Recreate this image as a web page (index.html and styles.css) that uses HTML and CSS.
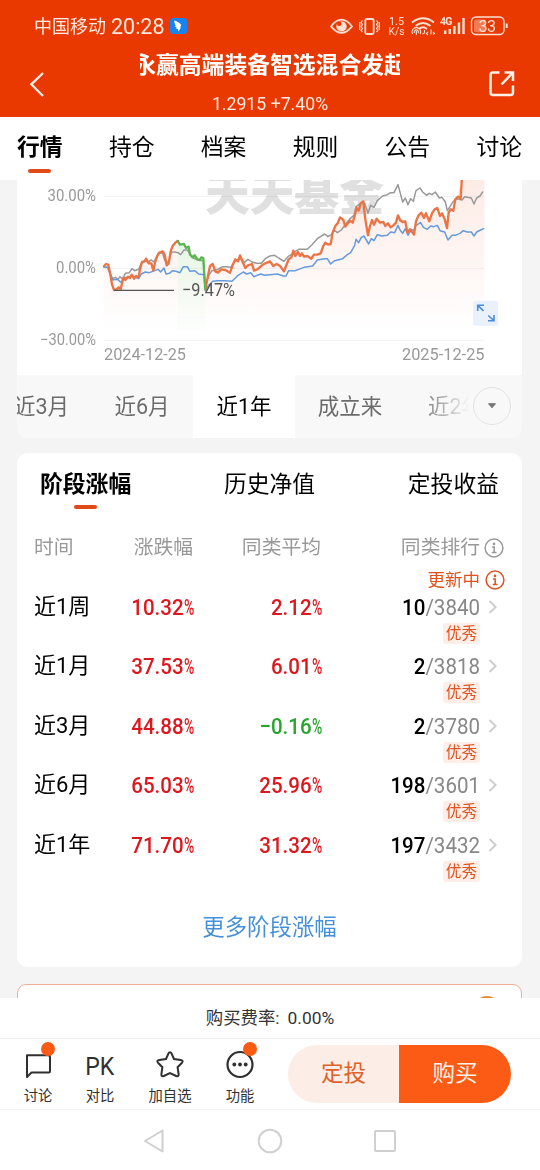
FILE: index.html
```html
<!DOCTYPE html>
<html lang="zh-CN">
<head>
<meta charset="utf-8">
<title>基金行情</title>
<link rel="stylesheet" href="styles.css">
</head>
<body>
<div class="screen">
  <header class="header">
    <div class="status">
      <span class="carrier">中国移动</span><span class="clock">20:28</span>
      <svg class="bird" width="17" height="16" viewBox="0 0 17 16"><rect width="17" height="16" rx="3.5" fill="#1583f2"/><path d="M4.200 2.400Q10.500 4.500 11.200 7.200L10 9.500 11 9.600 8.400 13.600 8 11.300 6 10.500 6.700 9.800 4.800 8.300 5.800 8Q4.200 5.500 4.200 2.400Z" fill="#fff"/></svg>
      <svg class="status-icons" width="180" height="24" viewBox="329 14 180 24" fill="none" stroke="#fde0d4">
        <path d="M331 26.400Q341.500 13 352 26.400Q341.500 39.500 331 26.400Z" stroke-width="1.700"/>
        <circle cx="341.500" cy="26.400" r="5.200" fill="#fde0d4" stroke="none"/><circle cx="339.300" cy="23.800" r="2.300" fill="#e93900" stroke="none"/>
        <rect x="365.300" y="19" width="8.400" height="15" rx="1.500" stroke-width="1.800"/>
        <path d="M362.400 20.500l-1.300 2 1.300 2-1.300 2 1.300 2-1.300 2 1.300 1.500M376.600 20.500l1.300 2-1.300 2 1.300 2-1.300 2 1.300 2-1.300 1.500M359.700 22v8M379.300 22v8" stroke-width="1.200"/>
        <g class="speed"><text x="389" y="25" textLength="15" lengthAdjust="spacingAndGlyphs">1.5</text><text x="388.500" y="35.200" textLength="16" lengthAdjust="spacingAndGlyphs">K/s</text></g>
        <path d="M412 22.500Q423 14 434 22.500M415.500 26Q423 20 430.500 26M419 29Q423 25.600 427 29" stroke-width="2"/>
        <path d="M412.600 34a4.300 4.300 0 1 1 7.500 0M414.500 33a2.100 2.100 0 1 1 3.700 0M416.400 31v4M424.500 30v3l-2 1M428 32l-1.500 1.500 1.500 1.500M431 29.500v5M433 32l1.500 1.500-1.500 1" stroke-width="1.100"/>
        <text x="440" y="25" class="net" textLength="12.500">4G</text>
        <path d="M445.200 30.500V34M449.800 29V34M454.400 26V34M459 22.500V34M463.500 18V34" stroke-width="2.400"/>
        <rect x="471.500" y="17" width="32.500" height="17.500" rx="4.500" stroke-width="1.400"/><rect x="474" y="19.400" width="12" height="12.800" rx="2" fill="#f27b56" stroke="none"/>
        <path d="M506.700 23.500v4.500" stroke-width="2"/><text x="478.500" y="31.600" class="battery" textLength="17.500">33</text>
      </svg>
    </div>
    <div class="titlebar">
      <svg class="back" width="18" height="28" viewBox="0 0 18 28" fill="none" stroke="#ffeee8" stroke-width="2.300"><path d="M15 3L3.300 14.300 15 26"/></svg>
      <div class="title-box">
        <div class="marquee"><span>永赢高端装备智选混合发起</span></div>
        <div class="quote">1.2915 +7.40%</div>
      </div>
      <svg class="share" width="26" height="26" viewBox="0 0 26 26" fill="none" stroke="#ffeee8" stroke-width="2.500"><path d="M10.500 1.500H4Q1.500 1.500 1.500 4V21.500Q1.500 24 4 24H21.500Q24 24 24 21.500V14.500M15.500 1.500H24V10M24 1.500L12.500 13.500"/></svg>
    </div>
  </header>

  <nav class="tabs">
    <span class="tab active">行情</span><span class="tab">持仓</span><span class="tab">档案</span><span class="tab">规则</span><span class="tab">公告</span><span class="tab">讨论</span>
  </nav>

  <main class="content">
    <section class="chart-card">
      <svg class="chart" width="505" height="195" viewBox="17 180 505 195">
        <defs>
          <linearGradient id="warm" x1="0" y1="0" x2="0" y2="1"><stop offset="0" stop-color="#fdebe5"/><stop offset="1" stop-color="#fdebe5" stop-opacity="0"/></linearGradient>
          <linearGradient id="cool" x1="0" y1="0" x2="0" y2="1"><stop offset="0" stop-color="#e3f7e4"/><stop offset="1" stop-color="#f4fcf4" stop-opacity=".2"/></linearGradient>
        </defs>
        <text x="205" y="211" class="watermark" textLength="179">天天基金</text>
        <g class="fills" transform="translate(0 176) scale(.33333)">
          <path fill="url(#warm)" d="M312 470V270L325 266 342 342 362 340 370 305 420 280 438 248 460 284 488 226 500 268 533 195 570 236 610 246 616 340 638 264 690 290 720 238 756 264 806 256 852 286 880 224 934 248 962 232 992 204 1020 124 1050 134 1090 76 1104 178 1122 130 1180 148 1194 118 1216 136 1242 176 1264 110 1288 136 1312 96 1341 156 1386 12H1453V470Z"/>
          <path fill="url(#cool)" d="M533 195L570 236 610 246 616 340V465H533Z"/>
        </g>
        <path d="M104 196.300H484M104 268.300H484M104 340.300H484" stroke="#000" stroke-opacity=".055"/>
        <g transform="translate(0 176) scale(.33333)" fill="none" stroke-linejoin="round" stroke-linecap="round">
          <path class="gray-line" d="M312 274L322 274 330 292 338 308 346 304 354 310 360 302 368 310 376 292 388 290 396 278 404 284 416 280 424 262 434 254 444 258 454 252 462 258 470 242 476 230 488 232 494 252 500 264 508 250 514 228 524 228 534 230 542 236 552 222 562 222 570 234 580 246 594 252 610 254 616 330 626 298 636 284 650 282 668 272 678 272 692 274 704 256 714 252 724 246 732 260 744 250 756 258 770 262 784 262 796 248 810 240 824 238 836 246 852 256 864 242 876 234 886 226 896 220 922 220 936 206 952 188 974 174 984 182 994 176 1002 162 1012 170 1024 162 1034 148 1050 128 1062 118 1068 92 1082 82 1094 82 1104 112 1112 88 1122 94 1132 74 1148 60 1162 56 1172 50 1182 50 1194 26 1208 78 1216 66 1224 86 1232 68 1240 76 1248 44 1260 36 1268 48 1280 58 1288 52 1296 56 1306 48 1318 66 1326 64 1336 78 1342 104 1350 92 1360 76 1372 68 1386 72 1394 62 1414 66 1422 84 1430 66 1440 60 1448 48"/>
          <path class="blue-line" d="M312 274H324L330 292 338 312 352 310 364 320 370 306 382 304 396 300 416 308 424 294 436 288 448 290 464 284 474 280 482 288 492 276 498 294 508 292 518 284 528 286 540 290 550 272 562 272 570 286 584 284 596 294 612 296 616 344 624 330 638 316 654 314 674 314 696 316 712 300 730 288 740 294 752 290 762 302 782 294 794 298 810 296 832 294 850 300 858 300 866 284 886 284 912 274 938 270 952 252 974 248 982 248 992 264 1004 254 1028 248 1042 236 1052 230 1064 208 1068 190 1076 200 1084 184 1092 180 1106 204 1114 188 1122 194 1132 176 1146 180 1162 178 1172 168 1184 170 1194 148 1200 162 1208 172 1216 158 1224 178 1234 160 1242 164 1248 148 1262 140 1270 154 1282 160 1292 150 1302 152 1312 148 1320 164 1334 168 1344 192 1356 178 1366 178 1380 172 1390 164 1402 168 1414 168 1422 180 1430 168 1442 162 1451 158"/>
          <path class="orange-line" d="M312 270L318 264 325 266 330 290 336 325 342 342 350 340 356 334 362 340 370 305 376 312 384 302 390 306 395 296 402 308 408 300 416 304 420 280 426 258 434 256 438 248 446 262 454 262 460 284 466 256 472 240 478 230 488 226 494 236 500 268 506 262 512 226 518 210 526 200 533 195M616 340L624 300 630 270 638 264 646 286 654 290 664 280 676 282 690 290 698 268 706 250 714 256 720 238 728 258 736 276 744 268 756 264 762 284 772 280 786 268 796 262 810 256 820 270 830 264 840 270 852 286 858 270 866 250 874 244 880 224 886 240 894 228 900 240 906 232 912 242 922 240 934 248 942 236 952 236 962 232 970 210 976 200 984 206 992 204 998 170 1006 150 1014 140 1020 124 1030 132 1036 152 1042 144 1050 134 1058 140 1064 120 1070 96 1076 104 1082 82 1090 76 1096 130 1104 178 1110 150 1116 132 1122 146 1130 128 1140 140 1150 138 1156 150 1164 142 1172 154 1180 148 1188 140 1194 118 1200 132 1208 138 1216 136 1222 170 1230 160 1242 176 1248 136 1256 118 1264 110 1272 126 1278 112 1288 136 1296 112 1304 100 1312 96 1320 120 1326 112 1334 130 1341 156 1346 110 1352 100 1360 104 1366 70 1374 62 1382 68 1386 0"/>
          <path class="green-line" d="M533 195L540 206 552 204 558 216 566 212 570 236 578 244 584 238 592 250 600 252 604 244 610 246 613 300 616 340"/>
        </g>
        <path d="M114 290.400H174" stroke="#555" stroke-width="1.200"/>
        <text x="182" y="295.500" class="low" textLength="53" lengthAdjust="spacingAndGlyphs">−9.47%</text>
        <g class="axis">
          <text x="47.500" y="201.300" textLength="48.500" lengthAdjust="spacingAndGlyphs">30.00%</text><text x="56" y="273.300" textLength="40" lengthAdjust="spacingAndGlyphs">0.00%</text><text x="40" y="345.300" textLength="56" lengthAdjust="spacingAndGlyphs">−30.00%</text>
          <text x="104" y="360.300" textLength="82" lengthAdjust="spacingAndGlyphs">2024-12-25</text><text x="402" y="360.300" textLength="82.500" lengthAdjust="spacingAndGlyphs">2025-12-25</text>
        </g>
        <rect x="473" y="300.700" width="25" height="25" rx="2.500" fill="#e8f1fd"/>
        <path d="M477.700 311V305.300H484M478 305.600L483.500 310.800M494 315V320.800H488M493.700 320.500L488.300 315.500" fill="none" stroke="#488bd8" stroke-width="1.600"/>
      </svg>
      <div class="periods">
        <span class="period first">近3月</span><span class="period">近6月</span><span class="period selected">近1年</span><span class="period since">成立来</span><span class="period faded">近2年</span>
        <span class="drop"><svg width="10" height="6" viewBox="0 0 10 6"><path d="M1.500.7H8.500L5 4.800Z" fill="#777" stroke="#777" stroke-linejoin="round"/></svg></span>
      </div>
    </section>

    <section class="perf-card">
      <div class="subtabs"><span class="subtab active">阶段涨幅</span><span class="subtab">历史净值</span><span class="subtab">定投收益</span></div>
      <div class="cols head"><span>时间</span><span class="num">涨跌幅</span><span class="num">同类平均</span><span class="rank">同类排行</span><svg class="info" width="20" height="20" viewBox="0 0 20 20"><use href="#info"/></svg></div>
      <div class="updating"><span>更新中</span><svg class="info" width="20" height="20" viewBox="0 0 20 20"><use href="#info"/></svg></div>
      <div class="cols row"><span>近1周</span><span class="num up">10.32<i>%</i></span><span class="num up">2.12<i>%</i></span><span class="rank"><b>10</b>/3840</span><svg class="chev" width="10" height="14"><use href="#chev"/></svg><em>优秀</em></div>
      <div class="cols row"><span>近1月</span><span class="num up">37.53<i>%</i></span><span class="num up">6.01<i>%</i></span><span class="rank"><b>2</b>/3818</span><svg class="chev" width="10" height="14"><use href="#chev"/></svg><em>优秀</em></div>
      <div class="cols row"><span>近3月</span><span class="num up">44.88<i>%</i></span><span class="num down">−0.16<i>%</i></span><span class="rank"><b>2</b>/3780</span><svg class="chev" width="10" height="14"><use href="#chev"/></svg><em>优秀</em></div>
      <div class="cols row"><span>近6月</span><span class="num up">65.03<i>%</i></span><span class="num up">25.96<i>%</i></span><span class="rank"><b>198</b>/3601</span><svg class="chev" width="10" height="14"><use href="#chev"/></svg><em>优秀</em></div>
      <div class="cols row"><span>近1年</span><span class="num up">71.70<i>%</i></span><span class="num up">31.32<i>%</i></span><span class="rank"><b>197</b>/3432</span><svg class="chev" width="10" height="14"><use href="#chev"/></svg><em>优秀</em></div>
      <div class="more">更多阶段涨幅</div>
    </section>

    <section class="promo"><svg width="28" height="28" viewBox="0 0 28 28"><circle cx="14" cy="14" r="13" fill="#ffc66b" stroke="#e38b2c" stroke-width="2"/></svg></section>
  </main>

  <footer class="footer">
    <div class="fee"><span>购买费率:</span><span class="fee-value">0.00%</span></div>
    <div class="actions">
      <div class="action talk"><svg width="32" height="32" viewBox="0 0 32 32"><path d="M5 8.200H26Q28 8.200 28 10V24Q28 25.500 26.500 25.500H9.500L5 30Z" fill="none" stroke="#303030" stroke-width="2" stroke-linejoin="round"/></svg><span>讨论</span><i class="dot"></i></div>
      <div class="action pk"><strong>PK</strong><span>对比</span></div>
      <div class="action star"><svg width="32" height="32" viewBox="0 0 32 32"><path d="M16 5.200Q17 5.200 17.500 6.300L20 12 26.800 13Q29.800 13.700 28 15.700L23.600 20.200 24.600 27Q24.900 30.200 22.200 29L16 26 9.800 29Q7.100 30.200 7.400 27L8.400 20.200 4 15.700Q2.200 13.700 5.200 13L12 12 14.500 6.300Q15 5.200 16 5.200Z" fill="none" stroke="#303030" stroke-width="2"/></svg><span>加自选</span></div>
      <div class="action func"><svg width="32" height="32" viewBox="0 0 32 32"><circle cx="16" cy="17.500" r="12.500" fill="none" stroke="#303030" stroke-width="2.200"/><g fill="#303030"><circle cx="10.300" cy="17.500" r="1.900"/><circle cx="16" cy="17.500" r="1.900"/><circle cx="21.700" cy="17.500" r="1.900"/></g></svg><span>功能</span><i class="dot"></i></div>
      <div class="buttons"><span class="invest">定投</span><span class="buy">购买</span></div>
    </div>
    <div class="sysnav">
      <svg width="24" height="26" viewBox="0 0 24 26"><path d="M20.500 2.500V23.500L3 13Z"/></svg>
      <svg width="26" height="26" viewBox="0 0 26 26"><circle cx="13" cy="13" r="11.300"/></svg>
      <svg width="24" height="26" viewBox="0 0 24 26"><rect x="2" y="3" width="20" height="20" rx="1"/></svg>
    </div>
  </footer>
</div>
<svg class="symbols" width="0" height="0">
  <symbol id="info" viewBox="0 0 20 20"><circle cx="10" cy="10" r="8.900" fill="none" stroke="currentColor" stroke-width="1.500"/><circle cx="10" cy="5.900" r="1.300" fill="currentColor"/><path d="M8 8.900H10.200V14.500M7.700 14.500H12.500" fill="none" stroke="currentColor" stroke-width="1.500"/></symbol>
  <symbol id="chev" viewBox="0 0 10 14"><path d="M1.500 1L7.700 7 1.500 13" fill="none" stroke="#ccc" stroke-width="1.800"/></symbol>
</svg>
</body>
</html>
```
FILE: styles.css
```css
* { box-sizing: border-box; }
body { margin: 0; background: #f4f4f4; color: #000; font-family: Roboto, "Noto Sans CJK SC", sans-serif; }
span, strong, em, text { white-space: nowrap; }
.screen { width: 540px; height: 1170px; overflow: hidden; display: flex; flex-direction: column; }
.symbols { position: absolute; }

.header { height: 117px; background: #e93900; color: #ffe9e0; flex: none; }
.status { height: 52px; padding: 0 31px 0 34px; display: flex; align-items: center; }
.carrier { font-size: 18px; line-height: 24px; width: 77px; padding-top: 1px; }
.clock { font-size: 21.5px; line-height: 24px; width: 59px; padding-top: 2px; }
.status-icons { margin-left: auto; }
.status-icons text { fill: #fde0d4; stroke: none; }
.speed { font-size: 10.5px; }
.net { font-size: 10.5px; font-weight: 700; }
.battery { font-size: 16px; }
.titlebar { height: 65px; display: flex; padding: 0 25px 0 28px; }
.back { margin-top: 18px; }
.share { margin: 19px 0 0 auto; }
.title-box { width: 260px; margin-left: 94px; }
.marquee { height: 28px; display: flex; justify-content: center; overflow: hidden; font-size: 22.8px; line-height: 28px; font-weight: 700; color: #fff; }
.quote { text-align: center; font-size: 17.7px; line-height: 20px; margin-top: 14px; }

.tabs { height: 63px; padding: 0 18px 0 17px; background: #fff; display: flex; justify-content: space-between; flex: none; }
.tab { font-size: 22.8px; line-height: 62px; }
.tab.active, .subtab.active { font-weight: 700; display: flex; flex-direction: column; align-items: center; }
.tab.active::after, .subtab.active::after { content: ""; width: 23px; height: 4px; border-radius: 2px; background: #e14b18; margin-top: -10px; }

.content { padding: 0 18px 0 17px; height: 818px; overflow: hidden; flex: none; }
.chart-card { height: 258px; }
.chart { display: block; background: #fff; }
.watermark { font: 900 45px "Noto Sans CJK SC", sans-serif; fill: #e0e0e0; }
.fills { mix-blend-mode: multiply; }
.gray-line { stroke: #999; stroke-width: 4.5; }
.blue-line { stroke: #659bdc; stroke-width: 4.5; }
.orange-line { stroke: #ec7344; stroke-width: 7; }
.green-line { stroke: #5bb750; stroke-width: 7; }
.low { font-size: 18.5px; fill: #555; }
.axis { font-size: 16px; fill: #999; }
.periods { height: 63px; background: #f8f8f8; border-radius: 0 0 10px 10px; display: flex; align-items: stretch; overflow: hidden; color: #6c6c6c; font-size: 21.5px; line-height: 64px; }
.period { width: 102px; text-align: center; flex: none; }
.period.first { width: 74px; display: flex; justify-content: flex-end; padding-right: 22px; }
.period.selected { background: #fff; color: #000; }
.period.since { width: 110px; }
.period.faded { width: 68px; overflow: hidden; text-align: left; padding-left: 23px; color: transparent; background: linear-gradient(90deg, #777 25%, #f8f8f8 95%); background-clip: text; -webkit-background-clip: text; }
.drop { width: 38px; height: 38px; flex: none; border: 1px solid #e2e2e2; border-radius: 50%; margin-top: 12px; display: flex; align-items: center; justify-content: center; }

.perf-card { margin-top: 15px; height: 514px; background: #fff; border-radius: 11px; padding: 0 17px; }
.subtabs { height: 80px; padding: 0 6px; display: flex; justify-content: space-between; font-size: 22.8px; line-height: 63px; }
.subtab.active::after { margin-top: -11px; }
.cols { display: grid; grid-template-columns: 70px 90px 128px 158px 25px; font-size: 22px; line-height: 30px; }
.num, .rank { text-align: right; }
.head { height: 36px; font-size: 19.8px; color: #999; }
.head .num { padding-right: 1px; }
.info { justify-self: end; margin: 5px 1px 0 0; }
.updating { height: 23px; display: flex; justify-content: flex-end; align-items: center; gap: 5px; font-size: 17.5px; line-height: 22px; color: #df521f; }
.updating span { margin-top: -2px; }
.updating .info { margin: -1px 0 0; }
.row { height: 59.4px; grid-template-rows: 29px 20px; row-gap: 2px; }
.row .num { font-weight: 500; font-size: 22.8px; line-height: 31px; display: flex; justify-content: flex-end; transform: scaleX(.9); transform-origin: right; }
.row i { font-style: normal; width: 11.5px; transform: scaleX(.68); transform-origin: left; }
.up { color: #dc171d; }
.down { color: #27a52e; }
.row .rank { color: #888; font-size: 22.8px; line-height: 31px; transform: scaleX(.9); transform-origin: right; }
.row b { color: #000; font-weight: 500; }
.chev { margin: 8px 0 0 8px; }
.row em { grid-column: 4; grid-row: 2; justify-self: end; width: 37px; height: 21px; background: #feeee8; border-radius: 3px; color: #df521f; font-style: normal; font-size: 15.7px; line-height: 21px; text-align: center; }
.more { text-align: center; color: #4690d8; font-size: 22.4px; line-height: 30px; margin-top: 23px; }

.promo { height: 60px; margin-top: 17px; background: #fff; border: 1px solid #efb09a; border-radius: 9px; padding: 11px 20px; display: flex; justify-content: flex-end; }

.footer { background: #fff; height: 172px; flex: none; }
.fee { height: 41px; border-bottom: 1px solid #eee; display: flex; justify-content: center; gap: 8px; font-size: 17.4px; line-height: 40px; color: #333; }
.actions { height: 71px; border-bottom: 1px solid #f5f5f5; display: flex; padding-left: 7px; color: #303030; }
.action { width: 62px; position: relative; display: flex; flex-direction: column; align-items: center; font-size: 14.3px; }
.action svg { margin-top: 8px; }
.action span { line-height: 18px; margin-top: 8px; }
.action strong { font-size: 26.5px; font-weight: 400; line-height: 32px; margin-top: 11px; transform: scaleX(.87); }
.action.pk span { margin-top: 5px; }
.action.star { width: 78px; }
.dot { position: absolute; width: 14px; height: 14px; border-radius: 50%; background: #fb5b14; left: 34px; top: 3px; }
.buttons { display: flex; width: 223px; height: 58px; margin: 6px 29px 0 auto; border-radius: 29px; overflow: hidden; font-size: 22.6px; line-height: 58px; text-align: center; }
.invest { width: 111px; background: #fcede6; color: #df622a; }
.buy { flex: 1; background: #fb5b14; color: #fff1e8; }
.sysnav { height: 60px; display: flex; justify-content: space-between; align-items: center; padding: 1px 143px 0 142px; }
.sysnav svg { fill: none; stroke: #d0d0d0; stroke-width: 2; stroke-linejoin: round; }
```
